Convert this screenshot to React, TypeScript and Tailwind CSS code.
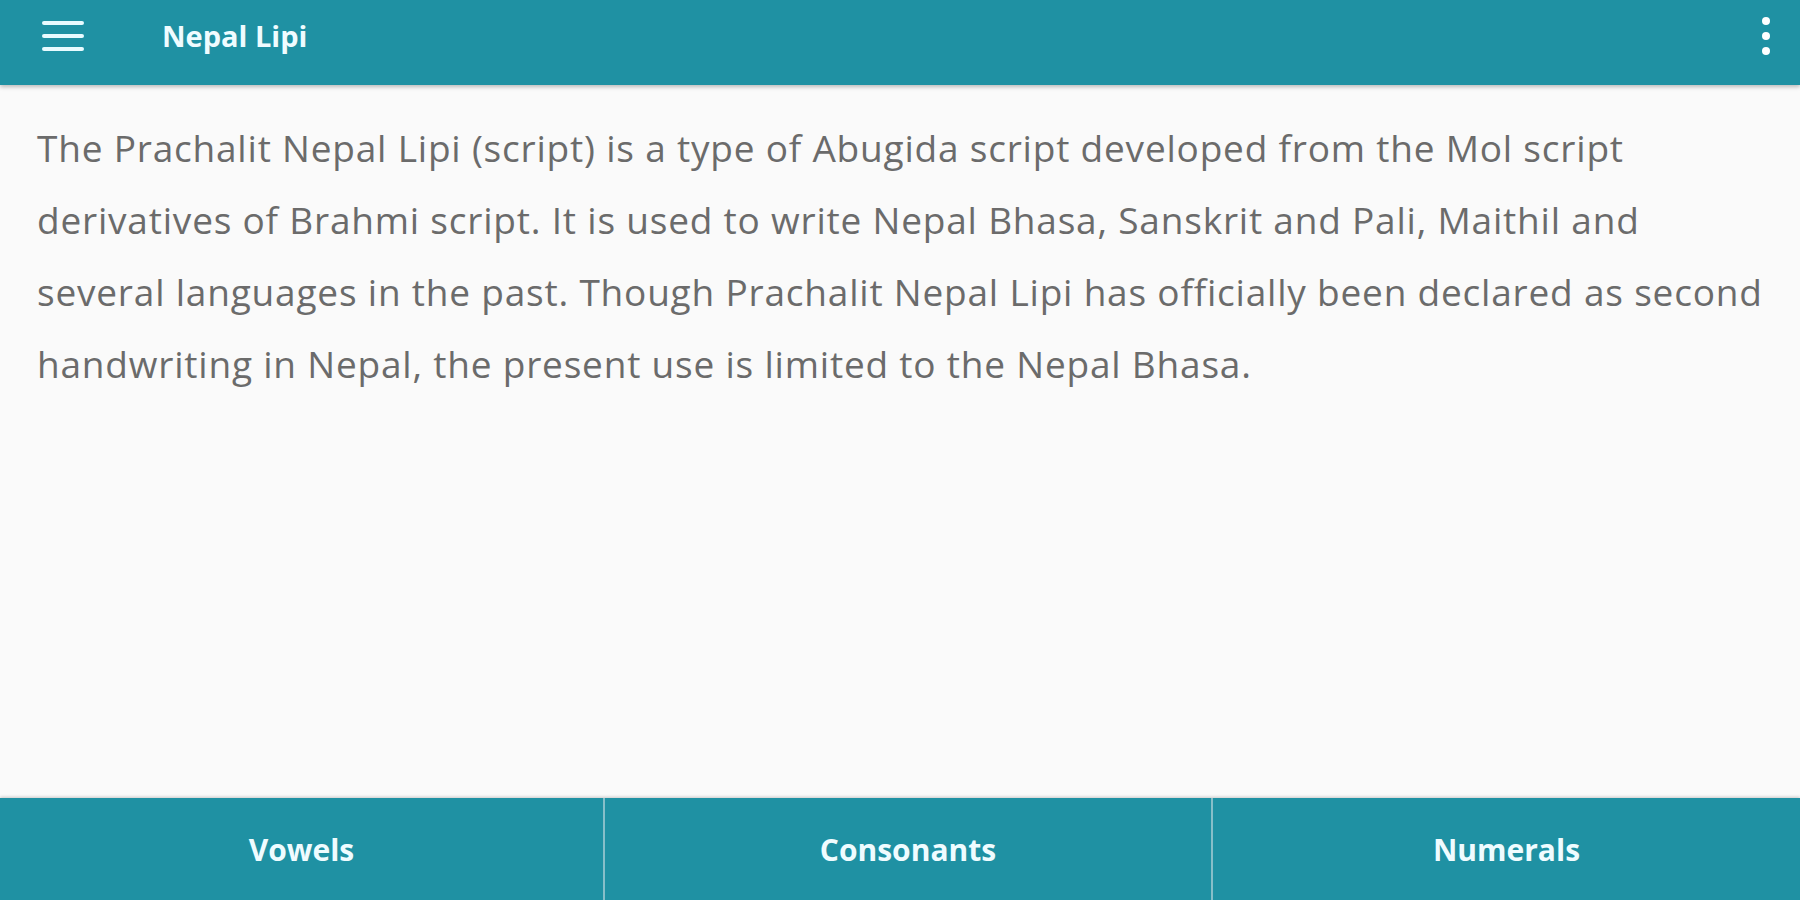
import React from 'react';

const lines = [
  'The Prachalit Nepal Lipi (script) is a type of Abugida script developed from the Mol script',
  'derivatives of Brahmi script. It is used to write Nepal Bhasa, Sanskrit and Pali, Maithil and',
  'several languages in the past. Though Prachalit Nepal Lipi has officially been declared as second',
  'handwriting in Nepal, the present use is limited to the Nepal Bhasa.',
];

const tabs = ['Vowels', 'Consonants', 'Numerals'];

const App = () => {
  return (
    <div className="h-[900px] w-full flex flex-col bg-[#fafafa] font-['Open_Sans',sans-serif] overflow-hidden">
      <header className="h-[85px] shrink-0 bg-[#1f91a3] flex items-center pb-[14px] shadow-[0_2px_4px_rgba(0,0,0,0.25)] relative z-10">
        <button type="button" className="ml-[42px] w-[42px] flex flex-col gap-[9px]">
          <span className="block h-[4px] w-full bg-[#e8fbff] rounded-sm" />
          <span className="block h-[4px] w-full bg-[#e8fbff] rounded-sm" />
          <span className="block h-[4px] w-full bg-[#e8fbff] rounded-sm" />
        </button>
        <h1 className="ml-[78px] text-[29px] font-bold text-[#effcff]">Nepal Lipi</h1>
        <div className="ml-auto mr-[30px] flex flex-col gap-[7px]">
          <span className="block w-[8px] h-[8px] rounded-full bg-white" />
          <span className="block w-[8px] h-[8px] rounded-full bg-white" />
          <span className="block w-[8px] h-[8px] rounded-full bg-white" />
        </div>
      </header>

      <main className="flex-1 px-[37px] pt-[27px]">
        <p className="text-[37px] tracking-[0.8px] leading-[72px] text-[#6b6b6b] whitespace-nowrap">
          {lines.map((l, i) => (
            <React.Fragment key={i}>
              {l}
              {i < lines.length - 1 && <br />}
            </React.Fragment>
          ))}
        </p>
      </main>

      <nav className="h-[102px] shrink-0 bg-[#1f91a3] grid grid-cols-[603px_608px_1fr] shadow-[0_-1px_3px_rgba(0,0,0,0.2)]">
        {tabs.map((t, i) => (
          <button
            key={t}
            type="button"
            className={`flex items-center justify-center text-[30px] font-bold text-[#effcff] ${
              i > 0 ? 'border-l-2 border-[#86bfc9]' : ''
            }`}
          >
            {t}
          </button>
        ))}
      </nav>
    </div>
  );
};

export default App;
